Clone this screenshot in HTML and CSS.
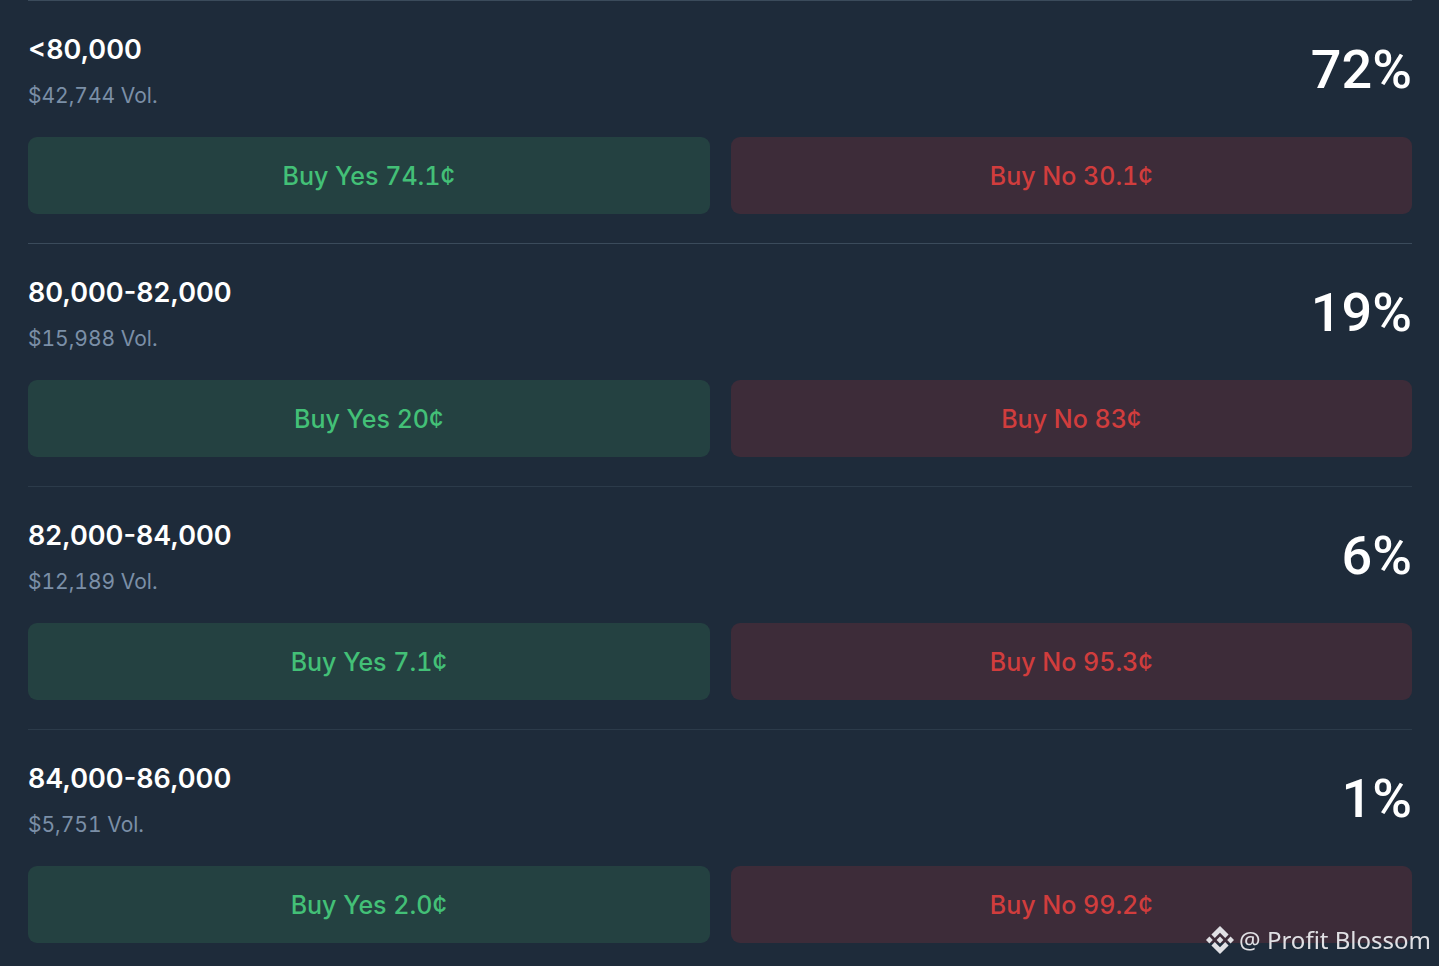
FILE: index.html
```html
<!DOCTYPE html>
<html lang="en">

<head>
    <meta charset="UTF-8">
    <meta name="viewport" content="width=device-width, initial-scale=1.0">
    <title>Price Market</title>
    <link rel="stylesheet" href="styles.css">
</head>

<body>
    <main class="markets">
        <section class="market">
            <div class="info">
                <div>
                    <h2 class="range">&lt;80,000</h2>
                    <p class="volume">$42,744 Vol.</p>
                </div>
                <p class="chance">72%</p>
            </div>
            <div class="buttons">
                <button class="buy yes">Buy Yes 74.1¢</button>
                <button class="buy no">Buy No 30.1¢</button>
            </div>
        </section>

        <section class="market">
            <div class="info">
                <div>
                    <h2 class="range">80,000-82,000</h2>
                    <p class="volume">$15,988 Vol.</p>
                </div>
                <p class="chance">19%</p>
            </div>
            <div class="buttons">
                <button class="buy yes">Buy Yes 20¢</button>
                <button class="buy no">Buy No 83¢</button>
            </div>
        </section>

        <section class="market">
            <div class="info">
                <div>
                    <h2 class="range">82,000-84,000</h2>
                    <p class="volume">$12,189 Vol.</p>
                </div>
                <p class="chance">6%</p>
            </div>
            <div class="buttons">
                <button class="buy yes">Buy Yes 7.1¢</button>
                <button class="buy no">Buy No 95.3¢</button>
            </div>
        </section>

        <section class="market">
            <div class="info">
                <div>
                    <h2 class="range">84,000-86,000</h2>
                    <p class="volume">$5,751 Vol.</p>
                </div>
                <p class="chance">1%</p>
            </div>
            <div class="buttons">
                <button class="buy yes">Buy Yes 2.0¢</button>
                <button class="buy no">Buy No 99.2¢</button>
            </div>
        </section>
    </main>

    <div class="credit">
        <svg class="logo" viewBox="0 0 28 28" aria-hidden="true">
            <path d="M14 0l8.6 8.6-3.4 3.4L14 6.8 8.800 12 5.4 8.600z" />
            <path d="M14 28l8.6-8.6-3.4-3.4-5.2 5.2L8.800 16l-3.4 3.4z" />
            <path d="M14 10.600l3.400 3.400-3.400 3.400-3.400-3.400z" />
            <path d="M3.400 10.600L6.800 14l-3.400 3.400L0 14z" />
            <path d="M24.600 10.600L28 14l-3.400 3.400-3.400-3.400z" />
        </svg>
        <span>@ Profit Blossom</span>
    </div>
</body>

</html>
```

FILE: styles.css
```css
* {
    box-sizing: border-box;
}

body {
    margin: 0;
    background-color: #1e2b3a;
    color: white;
    font-family: Inter, "Liberation Sans", sans-serif;
}

.markets {
    padding: 0 27px 0 28px;
}

.market {
    border-top: 1px solid #2c3b4a;
    padding: 27px 0 29px;
}

.market:nth-child(-n + 2) {
    border-color: #3b4b5b;
}

.info {
    display: flex;
    justify-content: space-between;
    align-items: center;
    margin-bottom: 25px;
}

.range {
    margin: 0 0 8px;
    font-size: 27px;
    font-weight: 600;
    line-height: 44px;
}

.volume {
    margin: 0;
    color: #7b8fa7;
    font-size: 21px;
    font-variant-numeric: tabular-nums;
    line-height: 32px;
}

.chance {
    margin: 0;
    font-family: Roboto, "Liberation Sans", sans-serif;
    font-size: 54px;
    font-weight: 500;
    line-height: 80px;
}

.buttons {
    display: grid;
    grid-template-columns: 1fr 1fr;
    gap: 21px;
}

.buy {
    height: 77px;
    border: none;
    border-radius: 9px;
    font-family: inherit;
    font-size: 25px;
    font-weight: 500;
    font-variant-numeric: tabular-nums;
    cursor: pointer;
}

.yes {
    background-color: #244141;
    color: #43c077;
}

.no {
    background-color: #3d2c39;
    color: #d13d3d;
}

.credit {
    position: fixed;
    right: 8px;
    bottom: 8px;
    display: flex;
    align-items: center;
    gap: 5px;
    color: #e0e0e4;
    font-family: "Noto Sans", "Open Sans", sans-serif;
    font-size: 24px;
    line-height: 36px;
}

.logo {
    width: 28px;
    height: 28px;
    fill: currentColor;
}
```
